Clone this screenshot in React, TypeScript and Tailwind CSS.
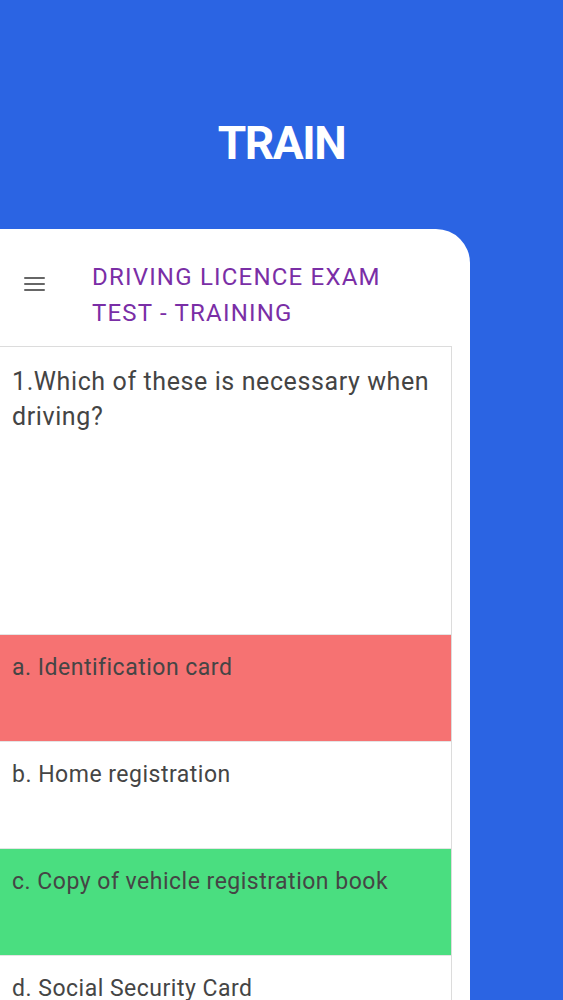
import React from 'react';

const options = [
  { label: 'a. Identification card', tone: 'bg-[#f67272]' },
  { label: 'b. Home registration', tone: 'bg-white' },
  { label: 'c. Copy of vehicle registration book', tone: 'bg-[#4ade80]' },
  { label: 'd. Social Security Card', tone: 'bg-white' },
];

export default function App() {
  return (
    <div
      className="h-[1000px] w-full overflow-hidden bg-[#2b64e3]"
      style={{ fontFamily: 'Roboto, "Noto Sans", sans-serif' }}
    >
      {/* Heading */}
      <div className="flex h-[229px] justify-center pt-[113px]">
        <h1 className="text-[46px] font-bold leading-[60px] tracking-[-1.5px] text-white">TRAIN</h1>
      </div>

      {/* Phone card */}
      <div className="h-[771px] w-[470px] overflow-hidden rounded-tr-[34px] bg-white">
        <div className="flex h-[117px] items-start pt-[30px]">
          <div className="flex w-[92px] justify-center pt-[17px] pr-[29px] pl-[5px]">
            <svg width="21" height="16" viewBox="0 0 21 16" fill="none">
              <rect x="0" y="1" width="21" height="2" rx="1" fill="#666" />
              <rect x="0" y="7" width="21" height="2" rx="1" fill="#666" />
              <rect x="0" y="13" width="21" height="2" rx="1" fill="#666" />
            </svg>
          </div>
          <div className="text-[24px] leading-[36px] tracking-[1.2px] text-[#7a2ea6]">
            <div>DRIVING LICENCE EXAM</div>
            <div>TEST - TRAINING</div>
          </div>
        </div>

        <div className="w-[452px] border-t border-r border-[#dcdcdc]">
          <div className="h-[287px] px-3 pt-[17px]">
            <p className="text-[25px] leading-[35px] tracking-[0.6px] text-[#444]">
              1.Which of these is necessary when driving?
            </p>
          </div>
          {options.map((o) => (
            <div key={o.label} className={`h-[107px] border-t border-[#e4e4e4] px-3 pt-[18px] ${o.tone}`}>
              <span className="text-[23px] leading-[30px] tracking-[0.5px] text-[#454545]">{o.label}</span>
            </div>
          ))}
        </div>
      </div>
    </div>
  );
}
